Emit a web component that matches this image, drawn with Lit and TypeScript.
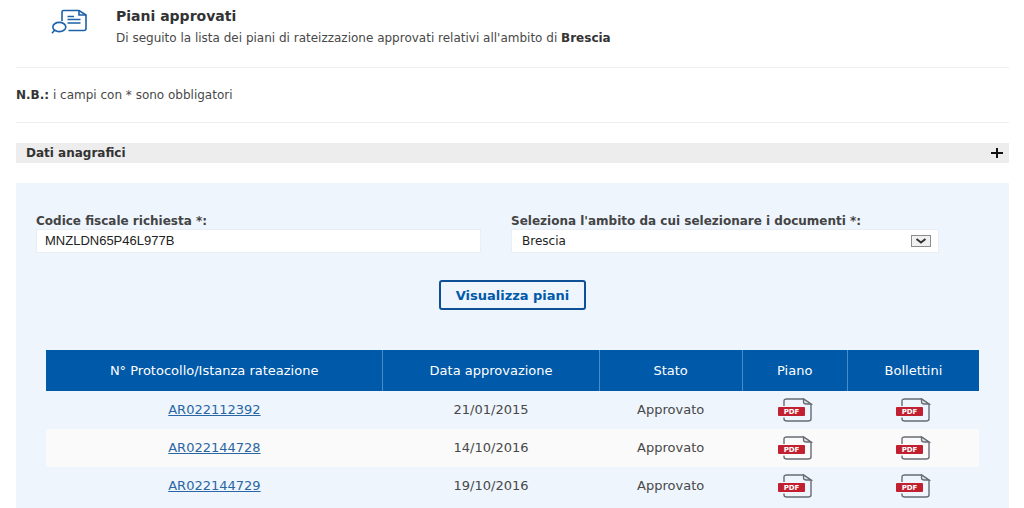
import { LitElement, html, css } from "lit";
import { customElement, property, state } from "lit/decorators.js";

interface Piano {
  protocollo: string;
  data: string;
  stato: string;
}

const PIANI: Piano[] = [
  { protocollo: "AR022112392", data: "21/01/2015", stato: "Approvato" },
  { protocollo: "AR022144728", data: "14/10/2016", stato: "Approvato" },
  { protocollo: "AR022144729", data: "19/10/2016", stato: "Approvato" },
];

@customElement("pdf-link")
class PdfLink extends LitElement {
  @property() label = "";

  static styles = css`
    :host { display: inline-block; }
    .link { display: block; }
    .icon { display: block; }
    .tag { font: bold 7px "DejaVu Sans", sans-serif; fill: #fff; }
  `;

  render() {
    return html`<a class="link" href="#" aria-label=${this.label}>
      <svg class="icon" width="36" height="26" viewBox="0 0 36 26" aria-hidden="true">
        <path d="M7 9V4Q7 2 10 2H26.5L34 7V22Q34 24 31 24H10Q7 24 7 22V20.5" fill="none" stroke="#686c72" stroke-width="1.4" />
        <path d="M26.5 2V5Q26.5 7 29.5 7H34Z" fill="#dfe3e8" stroke="#686c72" stroke-width="1.3" />
        <rect x="1" y="10" width="27" height="9" rx="1" fill="#c02030" />
        <text class="tag" x="14.5" y="17" text-anchor="middle">PDF</text>
      </svg>
    </a>`;
  }
}

@customElement("app-root")
class AppRoot extends LitElement {
  @state() private codice = "MNZLDN65P46L977B";

  static styles = css`
    :host {
      display: block;
      font: 12px/16px "DejaVu Sans", sans-serif;
      color: #484848;
      background: #fff;
    }
    * { box-sizing: border-box; }
    .page {
      display: flex;
      flex-direction: column;
      min-height: 100vh;
      padding: 0 15px 0 16px;
    }
    .intro {
      display: flex;
      gap: 26px;
      height: 68px;
      padding: 8px 0 0 34px;
      border-bottom: 1px solid #eee;
    }
    .intro-icon { display: block; flex: none; }
    .title { margin: 0 0 6px; font: bold 14px/16px "DejaVu Sans", sans-serif; color: #333; }
    .text { margin: 0; }
    .strong { color: #333; }
    .note { margin: 0; padding: 19px 0; border-bottom: 1px solid #eee; }
    .section {
      display: flex;
      align-items: center;
      justify-content: space-between;
      width: 100%;
      margin: 20px 0;
      padding: 2px 6px 2px 10px;
      border: 0;
      background: #ededed;
      font: bold 12px/16px "DejaVu Sans", sans-serif;
      color: #333;
      text-align: left;
    }
    .panel { flex: 1; padding: 30px 20px 0; background: #eef5fd; }
    .fields { display: grid; grid-template-columns: 1fr 1fr; padding-right: 3px; }
    .field { display: flex; flex-direction: column; padding-right: 30px; }
    .field-wide { padding-right: 47px; }
    .label { font: bold 12px/16px "DejaVu Sans", sans-serif; color: #444; }
    .control {
      width: 100%;
      height: 24px;
      border: 1px solid #e8eef4;
      border-radius: 0;
      background: #fff;
      color: #222;
    }
    .input { padding: 0 8px 2px; font: 13px "Liberation Sans", sans-serif; }
    .select { appearance: none; padding: 0 10px; font: 12px "DejaVu Sans", sans-serif; }
    .select-box { position: relative; }
    .arrow { position: absolute; top: 6px; right: 8px; pointer-events: none; }
    .actions { display: flex; justify-content: center; padding: 27px 0 40px; }
    .submit {
      height: 30px;
      padding: 0 15px;
      border: 2px solid #0f4f95;
      border-radius: 3px;
      background: transparent;
      font: bold 13px "DejaVu Sans", sans-serif;
      color: #0059a9;
    }
    .table-box { padding: 0 10px; }
    .table { width: 100%; border-collapse: collapse; table-layout: fixed; text-align: center; font-size: 13px; }
    .col-a { width: 36.1%; }
    .col-b { width: 23.2%; }
    .col-c { width: 15.3%; }
    .col-d { width: 11.3%; }
    .head { height: 41px; padding: 0; background: #0059a9; color: #fff; font-weight: normal; }
    .head + .head { border-left: 1px solid #4a8cc8; }
    .cell { height: 38px; padding: 0; }
    .row:nth-child(even) { background: #fafafa; }
    .protocol { color: #2a66a3; }
    .pdf { vertical-align: middle; }
  `;

  render() {
    return html`<main class="page">
      <header class="intro">
        <svg class="intro-icon" width="40" height="26" viewBox="0 0 40 26" fill="none" stroke="#1b62a8" stroke-width="1.6" aria-hidden="true">
          <path d="M12 13V4Q12 2.5 13.5 2.5H29L36 7V20.5Q36 22.5 34 22.5H18.5" />
          <path d="M29 2.5V7H36" />
          <path d="M17.5 8.5H24M17.5 11.5H30.5M17.5 15H30.5" stroke-width="1.3" />
          <ellipse cx="9.3" cy="19" rx="6.5" ry="4.6" />
          <path d="M4.8 22L2 25.2" />
        </svg>
        <div>
          <h1 class="title">Piani approvati</h1>
          <p class="text">Di seguito la lista dei piani di rateizzazione approvati relativi all'ambito di <b class="strong">Brescia</b></p>
        </div>
      </header>
      <p class="note"><b class="strong">N.B.:</b> i campi con * sono obbligatori</p>
      <button class="section" type="button" aria-expanded="false">
        Dati anagrafici
        <svg width="12" height="10" viewBox="0 0 12 10" aria-hidden="true"><path d="M0 5H12M6 0V10" stroke="#111" stroke-width="2" /></svg>
      </button>
      <section class="panel">
        <form @submit=${(e: Event) => e.preventDefault()}>
          <div class="fields">
            <div class="field">
              <label class="label" for="codice">Codice fiscale richiesta *:</label>
              <input class="control input" id="codice" type="text" .value=${this.codice}
                @input=${(e: Event) => (this.codice = (e.target as HTMLInputElement).value)} />
            </div>
            <div class="field field-wide">
              <label class="label" for="ambito">Seleziona l'ambito da cui selezionare i documenti *:</label>
              <div class="select-box">
                <select class="control select" id="ambito"><option>Brescia</option></select>
                <svg class="arrow" width="20" height="12" viewBox="0 0 20 12" aria-hidden="true">
                  <rect x="0.5" y="0.5" width="19" height="11" fill="#f0f0f0" stroke="#8c8c8c" />
                  <path d="M5.5 4L10 7.5L14.5 4" fill="none" stroke="#333" stroke-width="2" />
                </svg>
              </div>
            </div>
          </div>
          <div class="actions"><button class="submit" type="submit">Visualizza piani</button></div>
        </form>
        <div class="table-box">
          <table class="table">
            <colgroup><col class="col-a" /><col class="col-b" /><col class="col-c" /><col class="col-d" /><col /></colgroup>
            <thead>
              <tr>
                ${["N° Protocollo/Istanza rateazione", "Data approvazione", "Stato", "Piano", "Bollettini"].map(
                  (t) => html`<th class="head" scope="col">${t}</th>`
                )}
              </tr>
            </thead>
            <tbody>
              ${PIANI.map(
                (p) => html`<tr class="row">
                  <td class="cell"><a class="protocol" href="#">${p.protocollo}</a></td>
                  <td class="cell">${p.data}</td>
                  <td class="cell">${p.stato}</td>
                  <td class="cell"><pdf-link class="pdf" label="Piano ${p.protocollo}"></pdf-link></td>
                  <td class="cell"><pdf-link class="pdf" label="Bollettini ${p.protocollo}"></pdf-link></td>
                </tr>`
              )}
            </tbody>
          </table>
        </div>
      </section>
    </main>`;
  }
}
